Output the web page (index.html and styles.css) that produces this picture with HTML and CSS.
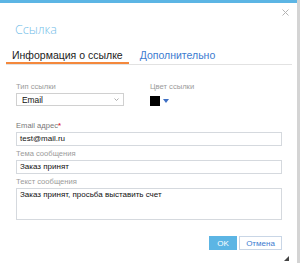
FILE: index.html
```html
<!DOCTYPE html>
<html lang="ru">
<head>
    <meta charset="UTF-8">
    <title>Ссылка</title>
    <link rel="stylesheet" href="styles.css">
</head>
<body>

<div class="dialog">
    <div class="dialog-top">
        <span class="close" title="Закрыть">
            <svg width="7" height="7" viewBox="0 0 7 7"><path d="M0.5 0.5L6.5 6.5M6.5 0.5L0.5 6.5" stroke="#b4b4b4" stroke-width="1"/></svg>
        </span>
    </div>
    <div class="dialog-title">Ссылка</div>

    <div class="tabs">
        <span class="tab active">Информация о ссылке</span>
        <span class="tab">Дополнительно</span>
    </div>

    <div class="form">
        <div class="row two">
            <div class="field">
                <div class="label">Тип ссылки</div>
                <div class="select">
                    <span>Email</span>
                    <svg width="5" height="3" viewBox="0 0 5 3"><path d="M0.5 0.5L2.5 2.5L4.5 0.5" fill="none" stroke="#999" stroke-width="0.8"/></svg>
                </div>
            </div>
            <div class="field">
                <div class="label">Цвет ссылки</div>
                <div class="color">
                    <span class="swatch"></span>
                    <svg width="6" height="4" viewBox="0 0 6 4"><path d="M0 0H6L3 4Z" fill="#3d6fc4"/></svg>
                </div>
            </div>
        </div>

        <div class="field">
            <div class="label label-dark">Email адрес<span class="req">*</span></div>
            <div class="input">test@mail.ru</div>
        </div>

        <div class="field">
            <div class="label">Тема сообщения</div>
            <div class="input">Заказ принят</div>
        </div>

        <div class="field">
            <div class="label">Текст сообщения</div>
            <div class="input textarea">Заказ принят, просьба выставить счет</div>
        </div>

        <div class="buttons">
            <button class="btn btn-ok">OK</button>
            <button class="btn btn-cancel">Отмена</button>
        </div>
    </div>

    <span class="resize"></span>
</div>

</body>
</html>
```

FILE: styles.css
```css
* {
    box-sizing: border-box;
    margin: 0;
    padding: 0;
}

body {
    background-color: #d4d4d4;
    font-family: 'Liberation Sans', Arial, sans-serif;
    color: #333;
    width: 300px;
    height: 263px;
    overflow: hidden;
}

.dialog {
    position: relative;
    display: flex;
    flex-direction: column;
    width: 297px;
    height: 263px;
    background: #FFFFFF;
    border-top: 3px solid #5cb5e4;
}

.dialog-top {
    display: flex;
    justify-content: flex-end;
    padding: 6px 8px 0 0;
    height: 13px;
    flex-shrink: 0;
}

.close {
    display: block;
    width: 7px;
    height: 7px;
    line-height: 0;
    cursor: pointer;
}

.dialog-title {
    font-family: 'Open Sans', sans-serif;
    font-weight: 300;
    font-size: 12.5px;
    line-height: 16px;
    color: #72bde8;
    padding: 6px 0 0 15px;
    height: 30px;
    flex-shrink: 0;
}

.tabs {
    display: flex;
    margin: 0 5px 0 6px;
    border-bottom: 1px solid #e2e2e2;
    height: 19px;
    flex-shrink: 0;
}

.tab {
    font-size: 10.5px;
    line-height: 14px;
    padding: 2px 6px 0;
    color: #3d7bd0;
    cursor: pointer;
}

.tab.active {
    color: #222;
    border-bottom: 2px solid #f4883c;
    margin-right: 5px;
}

.form {
    flex: 1;
    display: flex;
    flex-direction: column;
    gap: 3px;
    padding: 17px 15px 13px 16px;
}

.row.two {
    display: grid;
    grid-template-columns: 108px 1fr;
    gap: 26px;
    margin-bottom: 12px;
}

.field {
    display: flex;
    flex-direction: column;
    gap: 1px;
}

.label {
    font-size: 7.6px;
    line-height: 10px;
    color: #9a9a9a;
}

.label-dark {
    color: #777;
}

.req {
    color: #e0303a;
    font-weight: 700;
}

.select {
    display: flex;
    justify-content: space-between;
    align-items: center;
    height: 13px;
    padding: 0 4px 0 5px;
    border: 1px solid #d0d0d0;
    font-size: 8.4px;
    color: #111;
}

.color {
    display: flex;
    align-items: center;
    gap: 3px;
    height: 13px;
    padding-top: 2px;
}

.swatch {
    display: block;
    width: 10px;
    height: 10px;
    background: #000;
}

.input {
    height: 14px;
    padding: 0 3px;
    border: 1px solid #d5d9de;
    font-size: 8px;
    line-height: 12px;
    color: #111;
}

.textarea {
    height: 32px;
    line-height: 12px;
}

.buttons {
    display: flex;
    justify-content: flex-end;
    gap: 2px;
    margin-top: auto;
}

.btn {
    height: 14px;
    font-family: 'Liberation Sans', Arial, sans-serif;
    font-size: 8px;
    border: 1px solid #c9d6e6;
    background: #fff;
    color: #3d7bd0;
    cursor: pointer;
}

.btn-ok {
    width: 28px;
    background: #5cb5e4;
    border-color: #5cb5e4;
    color: #fff;
}

.btn-cancel {
    width: 43px;
}

.resize {
    position: absolute;
    right: 8px;
    bottom: 2px;
    width: 0;
    height: 0;
    border-left: 5px solid transparent;
    border-bottom: 5px solid #444;
}
```
